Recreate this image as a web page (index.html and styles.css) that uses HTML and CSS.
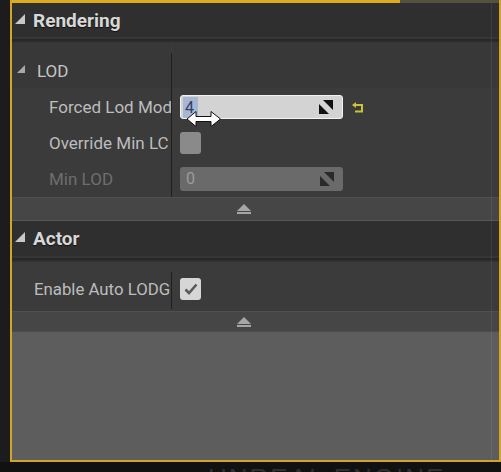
FILE: index.html
```html
<!DOCTYPE html>
<html>
<head>
<meta charset="utf-8">
<link rel="stylesheet" href="styles.css">
</head>
<body>
<div class="frame">
  <div class="tabline"><span class="tab-on"></span><span class="tab-off"></span></div>

  <div class="cat-head">
    <svg class="cat-tri" width="10" height="10" viewBox="0 0 10 10"><polygon points="10,0 10,10 0,10" fill="#c8c8c8"/></svg>
    <span>Rendering</span>
  </div>
  <div class="shadow"></div>
  <div class="props lod">
    <div class="split"></div>
    <div class="cell sub"><svg class="sub-tri" width="8" height="8" viewBox="0 0 8 8"><polygon points="8,0 8,8 0,8" fill="#a8a8a8"/></svg><span>LOD</span></div>
    <div class="cell sub"></div>

    <div class="cell label">Forced Lod Mod</div>
    <div class="cell value">
      <div class="numbox active">
        <span class="sel">4</span>
        <svg class="spin" width="14" height="14" viewBox="0 0 14 14"><polygon points="4,0 14,0 14,10" fill="#111"/><polygon points="0,4 0,14 10,14" fill="#111"/></svg>
      </div>
      <svg class="reset" width="13" height="12" viewBox="0 0 13 12"><path d="M3 3 H10 V9.5 H3" fill="none" stroke="#c9c23a" stroke-width="2"/><polygon points="0,3 4,0 4,6" fill="#c9c23a"/></svg>
    </div>

    <div class="cell label">Override Min LC</div>
    <div class="cell value"><span class="check off"></span></div>

    <div class="cell label disabled">Min LOD</div>
    <div class="cell value">
      <div class="numbox dim">
        <span class="num">0</span>
        <svg class="spin" width="14" height="14" viewBox="0 0 14 14"><polygon points="4,0 14,0 14,10" fill="#2a2a2a"/><polygon points="0,4 0,14 10,14" fill="#2a2a2a"/></svg>
      </div>
    </div>
  </div>
  <div class="collapse c1">
    <svg width="14" height="10" viewBox="0 0 14 10"><polygon points="7,0 14,7 0,7" fill="#a6a6a6"/><rect x="0" y="8" width="14" height="2" fill="#a6a6a6"/></svg>
  </div>

  <div class="cat-head actor">
    <svg class="cat-tri" width="10" height="10" viewBox="0 0 10 10"><polygon points="10,0 10,10 0,10" fill="#c8c8c8"/></svg>
    <span>Actor</span>
  </div>
  <div class="shadow"></div>
  <div class="props act">
    <div class="split"></div>
    <div class="cell label top">Enable Auto LODG</div>
    <div class="cell value top">
      <span class="check on"><svg width="14" height="12" viewBox="0 0 14 12"><path d="M1.5 6.5 L5 10 L12.5 1.5" fill="none" stroke="#5a5a5a" stroke-width="2.6"/></svg></span>
    </div>
  </div>
  <div class="collapse c2">
    <svg width="14" height="10" viewBox="0 0 14 10"><polygon points="7,0 14,7 0,7" fill="#a6a6a6"/><rect x="0" y="8" width="14" height="2" fill="#a6a6a6"/></svg>
  </div>

  <div class="empty"></div>

  <div class="vline"></div>
  <svg class="cursor" width="36" height="18" viewBox="0 0 36 18"><path d="M1 9 L10 1.5 V6.5 H25 V1.5 L34.5 9 L25 16.5 V11.5 H10 V16.5 Z" fill="#fff" stroke="#111" stroke-width="1"/></svg>
</div>
<div class="footer"><span>UNREAL ENGINE</span></div>
</body>
</html>
```

FILE: styles.css
```css
html, body {
  margin: 0;
  padding: 0;
}
body {
  width: 501px;
  height: 472px;
  overflow: hidden;
  background: #1c1c1c;
  font-family: Roboto, "Noto Sans", "Liberation Sans", sans-serif;
}
.frame {
  position: relative;
  margin-left: 10px;
  height: 462px;
  box-sizing: border-box;
  border: 2px solid #d2a52a;
  border-top: 0;
  display: flex;
  flex-direction: column;
  background: #5c5c5c;
  overflow: hidden;
}
.tabline {
  height: 3px;
  display: flex;
  flex: none;
}
.tab-on {
  width: 388px;
  background: #dcab1e;
}
.tab-off {
  flex: 1;
  background: #55513f;
}
.cat-head {
  flex: none;
  height: 34px;
  background: #2f2f2f;
  display: flex;
  align-items: center;
  padding-left: 3px;
  gap: 8px;
  color: #d8d8d8;
  font-weight: 700;
  font-size: 19px;
  text-shadow: 0 1px 1px #111;
}
.cat-head.actor {
  height: 36px;
  border-top: 1px solid #585858;
  box-sizing: border-box;
}
.cat-tri {
  margin-top: -3px;
}
.shadow {
  flex: none;
  height: 6px;
  background: linear-gradient(to bottom, #363636 0, #363636 2px, #262626 2px, #2a2a2a 4px, #383838 6px);
}
.props {
  flex: none;
  display: grid;
  grid-template-columns: 159px 1px 1fr;
  background: #3b3b3b;
}
.props.lod {
  grid-template-rows: 45px 38px 34px 37px;
}
.props.act {
  grid-template-rows: 49px;
}
.split {
  grid-column: 2;
  grid-row: 1 / -1;
  background: #1f1f1f;
  margin-top: 10px;
}
.props.act .split {
  margin-bottom: 2px;
}
.cell {
  display: flex;
  align-items: center;
  overflow: hidden;
  white-space: nowrap;
}
.cell.sub {
  background: #383838;
  padding-top: 10px;
  box-sizing: border-box;
  color: #c6c6c6;
  font-size: 17px;
}
.sub-tri {
  margin-left: 5px;
  margin-right: 12px;
  margin-top: -3px;
}
.cell.label {
  padding-left: 37px;
  font-size: 17px;
  color: #bdbdbd;
}
.props.act .cell.label {
  padding-left: 22px;
  font-size: 16.8px;
}
.cell.top {
  padding-top: 5px;
  box-sizing: border-box;
}
.cell.label.disabled {
  color: #6e6e6e;
}
.cell.value {
  padding-left: 8px;
  gap: 9px;
}
.numbox {
  width: 163px;
  height: 24px;
  box-sizing: border-box;
  border-radius: 3px;
  display: flex;
  align-items: center;
  justify-content: space-between;
  padding: 0 9px 0 2px;
  font-size: 16px;
}
.numbox.active {
  background: #d3d3d3;
  border: 1px solid #f2f2f2;
}
.numbox.dim {
  background: #6a6a6a;
  color: #9c9c9c;
  padding-left: 6px;
}
.sel {
  background: #a7b6d3;
  color: #2f3f66;
  padding: 1px 4px 1px 2px;
}
.reset {
  margin-top: 1px;
}
.check {
  width: 21px;
  height: 22px;
  border-radius: 3px;
  display: flex;
  align-items: center;
  justify-content: center;
}
.check.off {
  background: #8a8a8a;
}
.check.on {
  background: #d6d6d6;
}
.collapse {
  flex: none;
  box-sizing: border-box;
  background: #464646;
  display: flex;
  align-items: center;
  padding-left: 225px;
}
.collapse.c1 {
  height: 23px;
  border-top: 1px solid #4f4f4f;
}
.collapse.c2 {
  height: 21px;
  border-top: 1px solid #4f4f4f;
  border-bottom: 1px solid #4c4c4c;
}
.empty {
  flex: 1;
  background: #5d5d5d;
}
.vline {
  position: absolute;
  top: 3px;
  bottom: 0;
  right: 7px;
  width: 1px;
  background: rgba(255, 255, 255, 0.07);
}
.cursor {
  position: absolute;
  left: 174px;
  top: 110px;
}
.footer {
  height: 10px;
  overflow: hidden;
  background: #111;
  padding-left: 208px;
}
.footer span {
  display: block;
  font-family: "Liberation Sans", sans-serif;
  font-size: 26px;
  line-height: 26px;
  letter-spacing: 2px;
  color: #2f2f2f;
  margin-top: 3px;
}
```
